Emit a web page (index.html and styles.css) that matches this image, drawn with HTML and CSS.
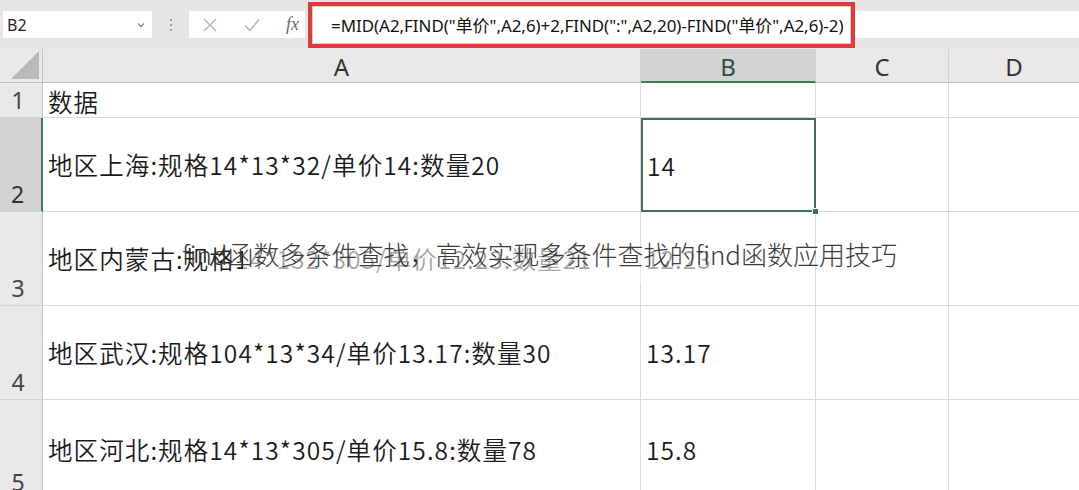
FILE: index.html
```html
<!DOCTYPE html>
<html lang="zh-CN">
<head>
<meta charset="utf-8">
<title>find函数多条件查找</title>
<link rel="stylesheet" href="styles.css">
</head>
<body>
<div class="app">
  <div class="toolbar">
    <div class="namebox">
      <span class="name">B2</span>
      <svg class="caret" width="8" height="6" viewBox="0 0 8 6"><path d="M1 1.5 L4 4.5 L7 1.5" fill="none" stroke="#8a8a8a" stroke-width="1.3"/></svg>
    </div>
    <div class="dots"><i></i><i></i><i></i></div>
    <div class="fbuttons">
      <svg width="16" height="16" viewBox="0 0 16 16"><path d="M2 2 L14 14 M14 2 L2 14" stroke="#b9b9b9" stroke-width="1.6" fill="none"/></svg>
      <svg width="18" height="16" viewBox="0 0 18 16"><path d="M2 8.5 L7 13.5 L16 2.5" stroke="#b9b9b9" stroke-width="1.6" fill="none"/></svg>
      <span class="fx">fx</span>
    </div>
    <div class="formula-wrap">
      <div class="formula-hl">
        <div class="formula">=MID(A2,FIND("单价",A2,6)+2,FIND(":",A2,20)-FIND("单价",A2,6)-2)</div>
      </div>
      <div class="formula-rest"></div>
    </div>
  </div>
  <div class="sheet">
    <div class="corner"><div class="tri"></div></div>
    <div class="colh">A</div>
    <div class="colh sel">B</div>
    <div class="colh">C</div>
    <div class="colh last">D</div>

    <div class="rowh r1">1</div>
    <div class="cell r1">数据</div>
    <div class="cell r1 num"></div>
    <div class="cell r1"></div>
    <div class="cell r1 last"></div>

    <div class="rowh sel">2</div>
    <div class="cell">地区上海:规格14*13*32/单价14:数量20</div>
    <div class="cell num active">14<span class="handle"></span></div>
    <div class="cell"></div>
    <div class="cell last"></div>

    <div class="rowh">3</div>
    <div class="cell">地区内蒙古:规格14*132*305/单价12.23:数量21</div>
    <div class="cell num">12.23</div>
    <div class="cell"></div>
    <div class="cell last"></div>

    <div class="rowh">4</div>
    <div class="cell">地区武汉:规格104*13*34/单价13.17:数量30</div>
    <div class="cell num">13.17</div>
    <div class="cell"></div>
    <div class="cell last"></div>

    <div class="rowh">5</div>
    <div class="cell">地区河北:规格14*13*305/单价15.8:数量78</div>
    <div class="cell num">15.8</div>
    <div class="cell"></div>
    <div class="cell last"></div>
  </div>
  <div class="veil"></div>
  <div class="caption">find函数多条件查找，高效实现多条件查找的find函数应用技巧</div>
</div>
</body>
</html>
```
FILE: styles.css
```css
* { box-sizing: border-box; }
html, body { margin: 0; padding: 0; }
body {
  width: 1079px; height: 490px; overflow: hidden; background: #fff;
  font-family: "Noto Sans", "Noto Sans CJK SC", sans-serif;
}
.app { position: relative; width: 1079px; height: 490px; overflow: hidden; }

.toolbar {
  height: 49px; background: #e6e6e6;
  display: flex; align-items: center;
  padding-left: 3px;
}
.namebox {
  width: 149px; height: 27px; background: #fff;
  display: flex; align-items: center; justify-content: space-between;
  padding: 0 7px 0 4px;
}
.name { font-size: 16px; color: #222; }
.dots {
  width: 37px; display: flex; flex-direction: column; align-items: center; gap: 3px;
}
.dots i { width: 2px; height: 2px; background: #a0a0a0; display: block; }
.fbuttons {
  width: 116px; height: 27px; background: #fff;
  display: flex; align-items: center; justify-content: space-between;
  padding: 0 6px 0 13px;
}
.fx { font-family: "Liberation Serif", serif; font-style: italic; font-size: 18px; color: #6a6a6a; }
.formula-wrap { flex: 1; display: flex; align-items: center; height: 49px; margin-left: 3px; }
.formula-hl {
  width: 547px; height: 46px; border: 4px solid #e0393e;
  display: flex; align-items: center;
}
.formula {
  flex: 1; height: 100%; background: #fff; border: 1px solid #cfcfcf;
  font-size: 16.9px; color: #111; padding-left: 18px;
  display: flex; align-items: center; white-space: nowrap; overflow: hidden;
  font-family: "Noto Sans", "Noto Sans CJK SC", sans-serif;
}
.formula-rest { flex: 1; height: 27px; background: #fff; }

.sheet {
  display: grid;
  grid-template-columns: 43px 598px 175px 133px 130px;
  grid-template-rows: 34px 35px 94px 94px 94px 100px;
}
.corner { background: #e9e9e9; border-right: 1px solid #c4c4c4; border-bottom: 1px solid #bdbdbd; position: relative; }
.tri {
  position: absolute; right: 3px; bottom: 3px; width: 0; height: 0;
  border-left: 28px solid transparent; border-bottom: 28px solid #b9b9b9;
}
.colh {
  background: #e9e9e9; border-right: 1px solid #d2d2d2; border-bottom: 1px solid #bdbdbd;
  display: flex; align-items: center; justify-content: center;
  font-size: 24px; color: #333; padding-top: 2px;
}
.colh.sel { background: #d3d3d3; border-bottom: 2px solid #3c7a5a; color: #2e4f3f; }
.colh.last { border-right: none; }
.rowh {
  background: #e9e9e9; border-right: 1px solid #c4c4c4; border-bottom: 1px solid #d4d4d4;
  display: flex; align-items: flex-end; justify-content: center;
  font-size: 23px; color: #444; padding-bottom: 1px; padding-right: 6px;
}
.rowh.r1 { align-items: center; padding-bottom: 0; }
.rowh.sel { background: #d3d3d3; border-right: 2px solid #3c7a5a; color: #333; }
.cell {
  border-right: 1px solid #dadada; border-bottom: 1px solid #dadada;
  display: flex; align-items: center; padding-left: 5px;
  font-size: 24.5px; color: #1a1a1a; white-space: nowrap;
  font-family: "Noto Sans CJK SC", sans-serif; letter-spacing: 1.1px;
  font-weight: 350;
}
.cell.r1 { padding-top: 2px; }
.cell.num { padding-left: 5px; }
.cell.last { border-right: none; }
.cell.active { border: 2px solid #3f6f5a; position: relative; padding-left: 4px; }
.handle {
  position: absolute; right: -5px; bottom: -5px; width: 7px; height: 7px;
  background: #3f6f5a; border: 1px solid #fff;
}
.veil {
  position: absolute; left: 243px; top: 246px; width: 478px; height: 36px;
  background: rgba(255,255,255,0.6);
}
.caption {
  position: absolute; left: 182px; top: 235px;
  font-size: 26px; color: #3a3a3a; white-space: nowrap;
  font-family: "Noto Sans CJK SC", sans-serif; font-weight: 300;
}
```
